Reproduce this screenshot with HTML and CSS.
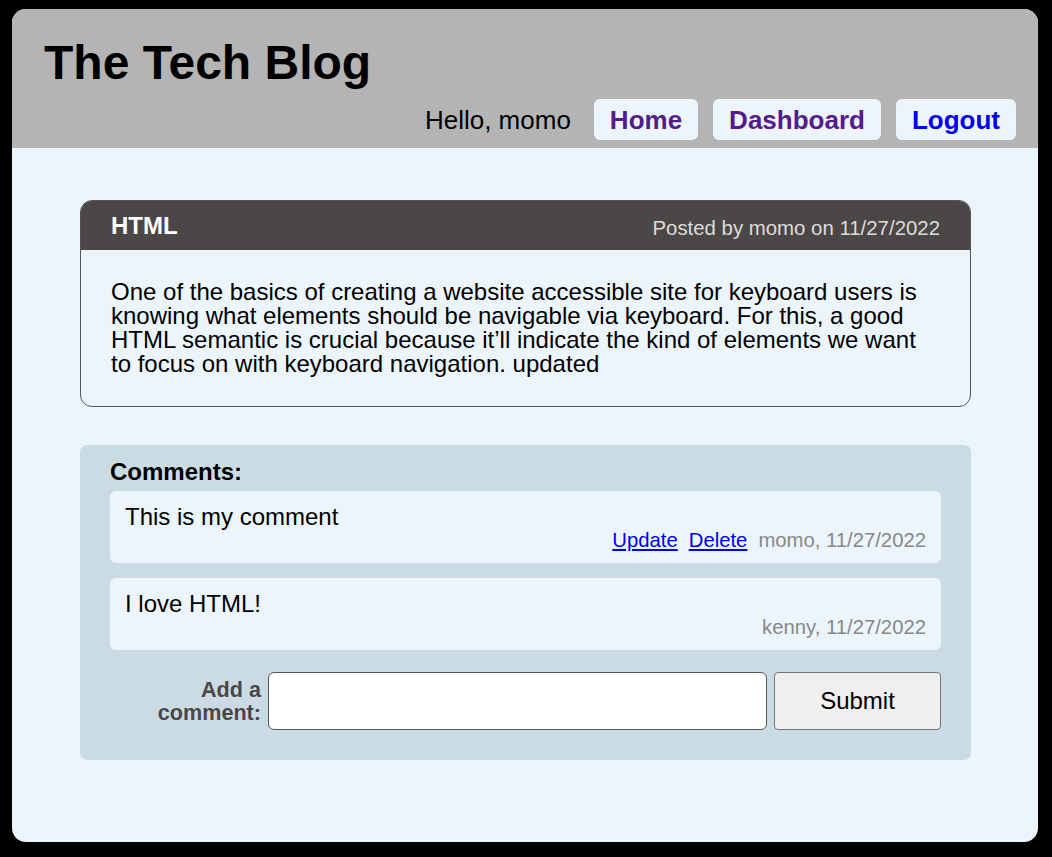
FILE: index.html
```html
<!DOCTYPE html>
<html lang="en">
<head>
<meta charset="utf-8">
<title>The Tech Blog</title>
<link rel="stylesheet" href="styles.css">
</head>
<body>
<div class="page">
  <header class="site-header">
    <h1 class="site-title">The Tech Blog</h1>
    <nav class="nav">
      <span class="greeting">Hello, momo</span>
      <a class="nav-btn visited" href="#">Home</a>
      <a class="nav-btn visited" href="#">Dashboard</a>
      <a class="nav-btn link" href="#">Logout</a>
    </nav>
  </header>
  <main class="main">
    <article class="post">
      <div class="post-head">
        <h2 class="post-title">HTML</h2>
        <span class="post-meta">Posted by momo on 11/27/2022</span>
      </div>
      <div class="post-body">One of the basics of creating a website accessible site for keyboard users is knowing what elements should be navigable via keyboard. For this, a good HTML semantic is crucial because it’ll indicate the kind of elements we want to focus on with keyboard navigation. updated</div>
    </article>
    <section class="comments">
      <h3 class="comments-title">Comments:</h3>
      <div class="comment">
        <p class="comment-text">This is my comment</p>
        <div class="comment-meta">
          <a href="#" class="comment-link">Update</a>
          <a href="#" class="comment-link">Delete</a>
          <span>momo, 11/27/2022</span>
        </div>
      </div>
      <div class="comment">
        <p class="comment-text">I love HTML!</p>
        <div class="comment-meta">
          <span>kenny, 11/27/2022</span>
        </div>
      </div>
      <form class="comment-form">
        <label class="comment-label" for="c">Add a comment:</label>
        <input class="comment-input" id="c" type="text">
        <button class="comment-submit" type="button">Submit</button>
      </form>
    </section>
  </main>
</div>
</body>
</html>
```
FILE: styles.css
```css
* { box-sizing: border-box; }
html, body { background: #000; }
body {
  margin: 0;
  padding: 9px 14px 15px 12px;
  font-family: "Liberation Sans", Arial, sans-serif;
  color: #000;
}
.page {
  min-height: calc(100vh - 24px);
  background: #edf5fc;
  border-radius: 14px;
  overflow: hidden;
  display: flex;
  flex-direction: column;
}
.site-header {
  background: #b4b4b4;
  padding: 26px 22px 8px 32px;
  display: flex;
  flex-direction: column;
}
.site-title {
  margin: 0;
  font-size: 48px;
  font-weight: bold;
  line-height: normal;
}
.nav {
  margin-top: 9px;
  display: flex;
  justify-content: flex-end;
  align-items: center;
  gap: 15px;
  font-size: 26px;
}
.greeting {
  margin-right: 8px;
  padding-top: 2px;
}
.nav-btn {
  display: block;
  background: #edf5fc;
  border-radius: 6px;
  padding: 6px 16px 4px;
  line-height: 31px;
  font-weight: bold;
  text-decoration: none;
}
.nav-btn.visited { color: #551a8b; }
.nav-btn.link { color: #0000ee; }
.main {
  padding: 52px 67px 0 68px;
}
.post {
  border: 1px solid #555;
  border-radius: 12px;
  overflow: hidden;
}
.post-head {
  background: #4b4746;
  height: 49px;
  display: flex;
  align-items: center;
  justify-content: space-between;
  padding: 0 30px;
}
.post-title {
  margin: 0;
  color: #fff;
  font-size: 24px;
  font-weight: bold;
  line-height: normal;
}
.post-meta {
  color: #dcdcdc;
  font-size: 20.4px;
  margin-top: 6px;
}
.post-body {
  padding: 30px 31px 30px 30px;
  font-size: 24px;
  line-height: 24px;
}
.comments {
  margin-top: 38px;
  background: #cbdbe3;
  border-radius: 7px;
  padding: 13px 30px 30px 30px;
}
.comments-title {
  margin: 0 0 5px;
  font-size: 24px;
  font-weight: bold;
  line-height: 28px;
}
.comment {
  background: #edf5fc;
  border-radius: 6px;
  padding: 13px 15px 12px;
  margin-bottom: 15px;
}
.comment-text {
  margin: 0;
  font-size: 24px;
  line-height: 26px;
}
.comment-meta {
  display: flex;
  justify-content: flex-end;
  gap: 11px;
  font-size: 20.3px;
  line-height: 21px;
  color: #888;
}
.comment-link { color: #0000ee; text-decoration: underline; }
.comment-form {
  margin-top: 22px;
  display: flex;
  align-items: center;
  gap: 7px;
}
.comment-label {
  flex: 0 0 151px;
  text-align: right;
  font-size: 21.6px;
  line-height: 23px;
  font-weight: bold;
  color: #4b4746;
}
.comment-input {
  flex: 1;
  height: 58px;
  border: 1px solid #555;
  border-radius: 6px;
  background: #fff;
  font-size: 24px;
  font-family: inherit;
}
.comment-submit {
  flex: 0 0 167px;
  height: 58px;
  background: #efefef;
  border: 1px solid #767676;
  border-radius: 4px;
  font-size: 24px;
  font-family: inherit;
  color: #000;
}
```
